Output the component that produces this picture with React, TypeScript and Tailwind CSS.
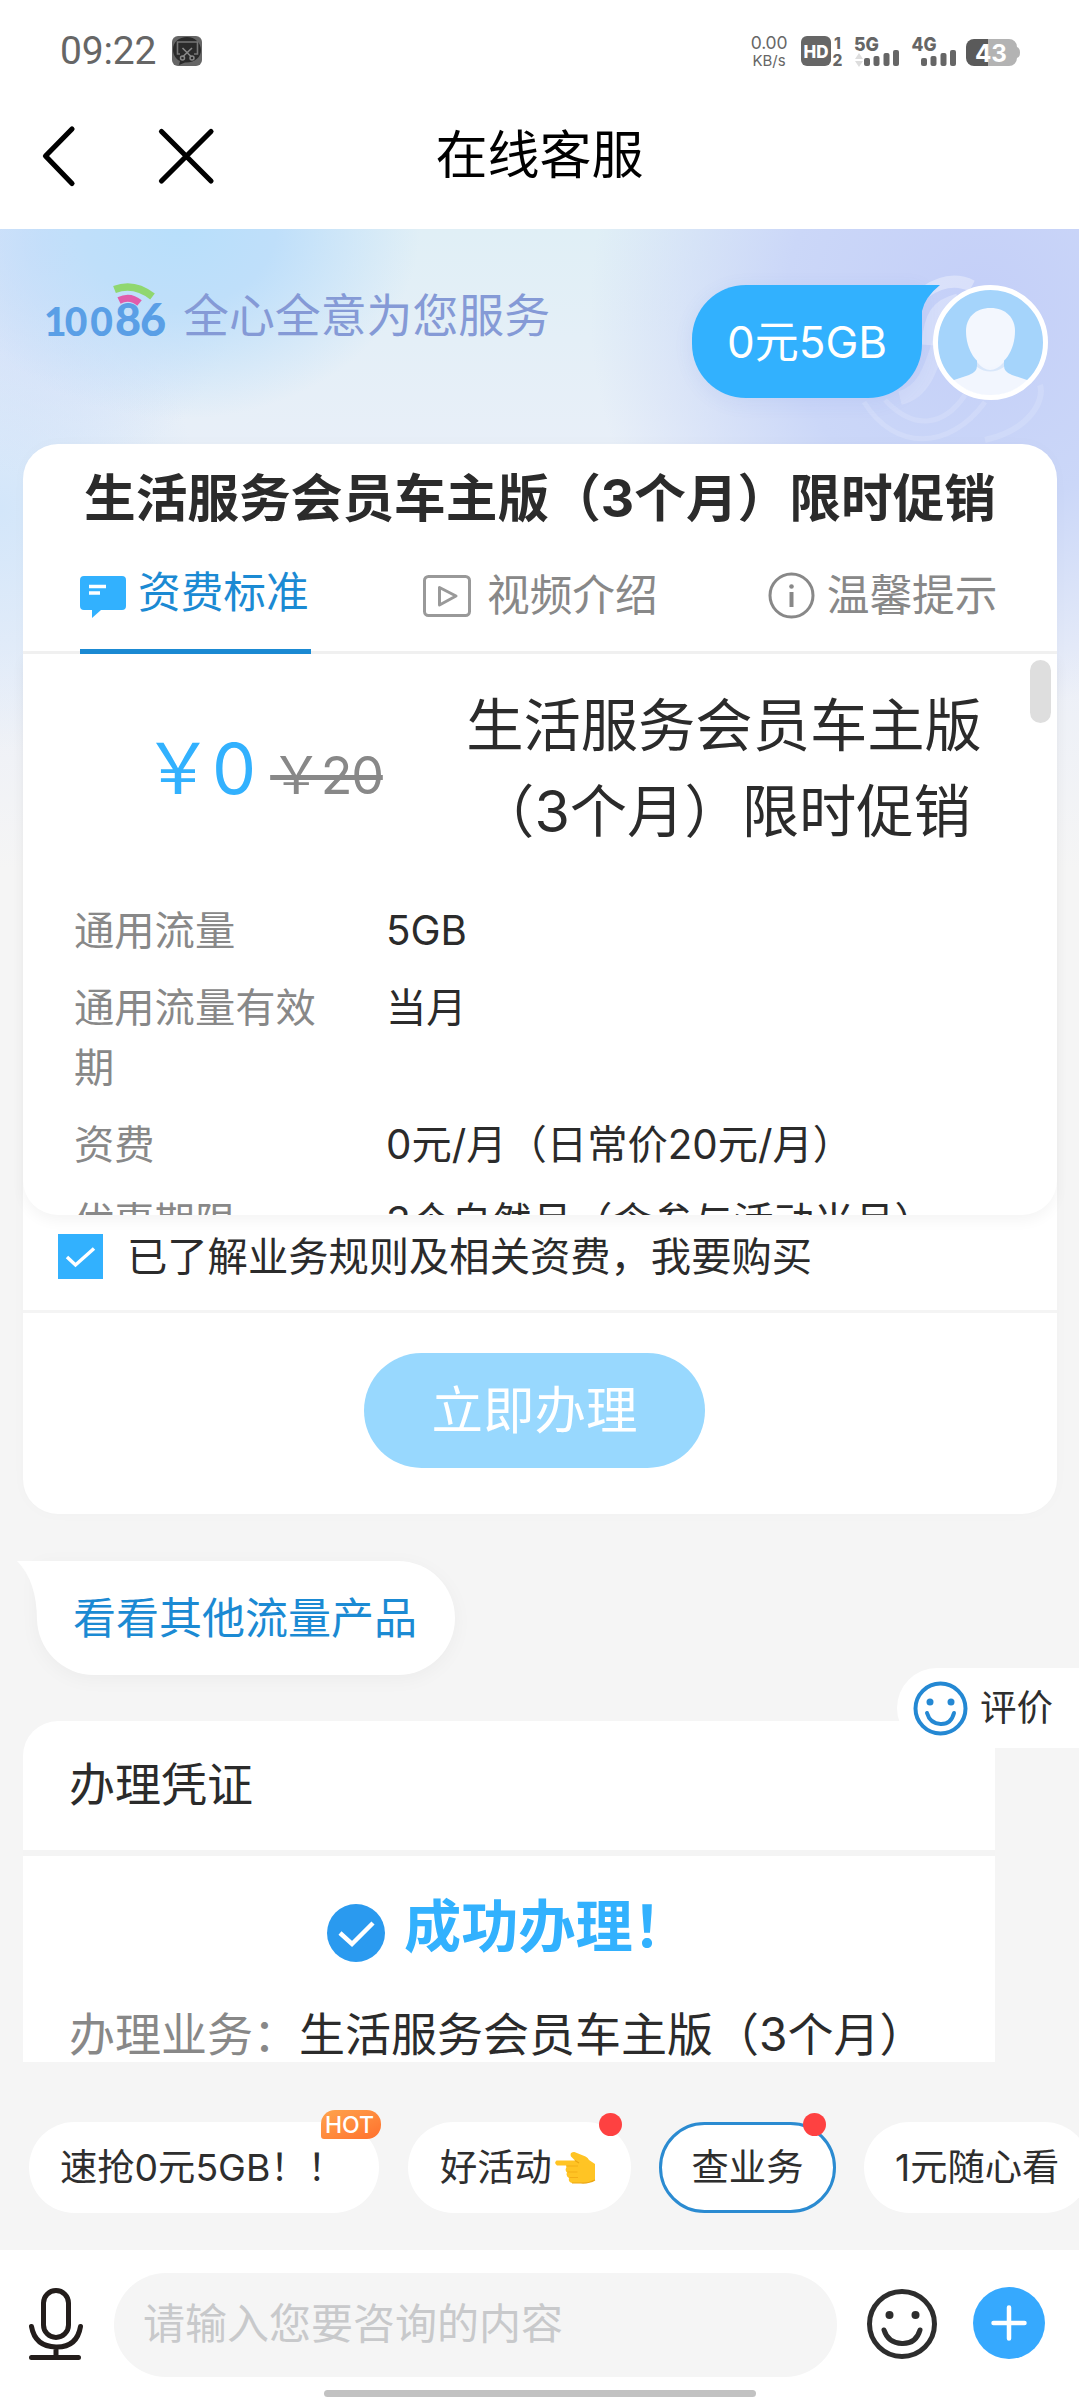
import React from "react";

function StatusBar() {
  return (
    <div className="flex h-[102px] items-center pl-[60px] text-[#666]">
      <span className="w-[112px] font-[Roboto] text-[39px] leading-none tracking-[-0.2px]">09:22</span>
      <svg width="30" height="30" viewBox="0 0 30 30">
        <rect width="30" height="30" rx="6" fill="#666" />
        <path d="M15 1C7 1 1 6 1 13.500C1 19 4 23 8 25l-1 4 6-2.500C23 27 29 21 29 14S23 1 15 1Z" fill="#2a2a2a" />
        <path d="M8 18H5.500V6h20v12H22" fill="none" stroke="#777" strokeWidth="1.600" />
        <path d="M10.500 12l9 9M20 12l-9.500 9" stroke="#888" strokeWidth="1.600" />
        <circle cx="10.500" cy="22" r="2" fill="none" stroke="#888" strokeWidth="1.500" />
        <circle cx="20" cy="22" r="2" fill="none" stroke="#888" strokeWidth="1.500" />
      </svg>
      <div className="ml-[547px] flex w-[40px] flex-col items-center font-[Inter] leading-none">
        <span className="text-[17.500px] leading-[17px] tracking-[-0.2px]">0.00</span>
        <span className="pt-[2px] text-[15px] leading-[15px]">KB/s</span>
      </div>
      <svg className="ml-[12px] overflow-visible" width="222" height="32" viewBox="801 35 222 32" fontFamily="Inter, sans-serif" fontWeight="800" fill="#666">
        <rect x="801" y="36" width="30" height="30" rx="6" />
        <text x="803.500" y="58" fontSize="17.500" fill="#fff" textLength="25" lengthAdjust="spacingAndGlyphs">HD</text>
        <text x="834" y="48.500" fontSize="15.500">1</text>
        <text x="832.500" y="65.500" fontSize="15.500">2</text>
        <text x="854" y="51" fontSize="19" textLength="25" lengthAdjust="spacingAndGlyphs">5G</text>
        <path d="M855 59l4-6 4 6zM855 61l4 6 4-6z" fill="#ddd" />
        <rect x="864" y="58" width="6" height="8" rx="2" />
        <rect x="873.500" y="56" width="6" height="10" rx="2" />
        <rect x="883.500" y="53" width="6" height="13" rx="2" />
        <rect x="893" y="50" width="6" height="16" rx="2" />
        <text x="911.500" y="51" fontSize="19" textLength="25" lengthAdjust="spacingAndGlyphs">4G</text>
        <rect x="921" y="58" width="6" height="8" rx="2" />
        <rect x="930.500" y="56" width="6" height="10" rx="2" />
        <rect x="940.500" y="53" width="6" height="13" rx="2" />
        <rect x="950" y="50" width="6" height="16" rx="2" />
        <path d="M988 39h21a8 8 0 0 1 8 8q3 1 3 5.500t-3 5.500a8 8 0 0 1-8 8h-21z" fill="#b3b3b3" />
        <path d="M988 39h-14a8 8 0 0 0-8 8v11a8 8 0 0 0 8 8h14z" fill="#5a5a5a" />
        <text x="975" y="61.500" fontSize="24" fontWeight="700" fill="#fff" textLength="32" lengthAdjust="spacingAndGlyphs">43</text>
      </svg>
    </div>
  );
}

function TitleBar() {
  return (
    <div className="relative flex h-[127px] items-start justify-center">
      <svg className="absolute left-[40px] top-[22px]" width="180" height="66" viewBox="40 124 180 66" fill="none" stroke="#000" strokeWidth="5.200" strokeLinecap="round" strokeLinejoin="round">
        <path d="M72 129L45.500 156L72 183.500" />
        <path d="M161.500 131.500L211 181M211 131.500L161.500 181" />
      </svg>
      <h1 className="pt-[24px] text-[52px] leading-[60px] text-black">在线客服</h1>
    </div>
  );
}

function Banner() {
  return (
    <div className="relative flex h-[215px] items-start pl-[45px]">
      <svg className="absolute left-[840px] top-[40px]" width="239" height="175" viewBox="840 269 239 175" fill="none" stroke="#fff">
        <path d="M925 292Q950 275 972 286" strokeWidth="12" strokeOpacity=".35" />
        <path d="M928 345C930 315 938 305 958 300" strokeWidth="13" strokeOpacity=".28" />
        <path d="M900 398C925 392 932 365 940 340" strokeWidth="14" strokeOpacity=".18" />
        <path d="M864 402C895 452 950 450 985 402M885 400C915 432 945 425 965 395" strokeWidth="5" strokeOpacity=".15" />
        <path d="M985 440C1030 430 1045 400 1040 385" strokeWidth="6" strokeOpacity=".14" />
      </svg>
      <div className="relative flex h-[112px] w-[138px] items-end font-['Lato'] font-black leading-none text-[#5a9fe6]">
        <svg className="absolute left-[66px] top-[51px]" width="46" height="28" viewBox="111 280 46 28" fill="none">
          <path d="M114.500 289.500Q134 282 152.500 296.500" stroke="#90d770" strokeWidth="7.500" />
          <path d="M119 300.500Q130 295 139.500 303" stroke="#e05cab" strokeWidth="7" />
        </svg>
        <span className="text-[39px] leading-[39px] tracking-[3px]">
          <span className="-ml-[1px] tracking-[-3px]">1</span><span className="ml-[1px]">00</span>
        </span>
        <span className="-ml-[1px] text-[45px] leading-[43px] tracking-[-1px]">86</span>
      </div>
      <span className="mt-[59px] text-[45.900px] font-normal leading-[56px] text-[#859ad6]">全心全意为您服务</span>
      <div className="absolute left-[692px] top-[56px] flex h-[113px] w-[230px] items-center justify-center rounded-[54px] rounded-tr-none bg-[#32b1fe] text-[44px] text-white shadow-[0_4px_20px_rgba(60,100,200,0.08)]">
        0元5GB
        <svg className="absolute left-[229px] top-0" width="20" height="26" viewBox="0 0 20 26"><path d="M0 0H19Q4 12 1 26H0Z" fill="#32b1fe" /></svg>
      </div>
      <svg className="absolute left-[932px] top-[55px]" width="117" height="117" viewBox="0 0 117 117">
        <defs><clipPath id="face"><circle cx="58.500" cy="58.500" r="53" /></clipPath></defs>
        <circle cx="58.500" cy="58.500" r="55" fill="#a5d4fb" />
        <g clipPath="url(#face)">
          <path d="M45 70V82q0 6-8 9L19 97V120H98V97L80 91q-8-3-8-9V70Z" fill="#f2f6fe" />
          <path d="M45 78Q58 94 72 78V83Q58 92 45 83Z" fill="#d9e7fa" />
          <path d="M58.500 24C74 24 83 34 83 47C83 66 72 83 58.500 83S34 66 34 47C34 34 43 24 58.500 24Z" fill="#f3f7fe" />
        </g>
        <circle cx="58.500" cy="58.500" r="55" fill="none" stroke="#fff" strokeWidth="5" />
      </svg>
    </div>
  );
}

function Tabs() {
  return (
    <div className="flex h-[102px] border-b-[3px] border-[#f1f1f1] pl-[57px] text-[42.700px] leading-[56px] text-[#888]">
      <div className="relative flex w-[231px] pt-[13px] text-[#1b8ad3]">
        <svg className="mt-[11px] shrink-0" width="46" height="42" viewBox="0 0 46 42">
          <path d="M4 0H42a4 4 0 0 1 4 4V30a4 4 0 0 1-4 4H21L12 42V34H4a4 4 0 0 1-4-4V4a4 4 0 0 1 4-4Z" fill="#32b1fe" />
          <path d="M9 10.500H26M9 17H20" stroke="#fff" strokeWidth="3.500" />
        </svg>
        <span className="ml-[12px] whitespace-nowrap">资费标准</span>
        <span className="absolute -bottom-[3px] left-0 h-[5px] w-[231px] bg-[#1b8ad3]" />
      </div>
      <div className="ml-[112px] flex pt-[16px]">
        <svg className="mt-[7px] shrink-0" width="48" height="42" viewBox="0 0 48 42" fill="none" stroke="#999" strokeWidth="3" strokeLinejoin="round">
          <rect x="1.500" y="1.500" width="45" height="39" rx="4" />
          <path d="M16.500 12.500V30L33 21Z" />
        </svg>
        <span className="ml-[16px]">视频介绍</span>
      </div>
      <div className="ml-[110px] flex pt-[16px]">
        <svg className="mt-[4px] shrink-0" width="47" height="47" viewBox="0 0 47 47" fill="none" stroke="#888" strokeWidth="3">
          <circle cx="23.500" cy="23.500" r="21.500" />
          <path d="M23.500 20V35" strokeWidth="4" />
          <circle cx="23.500" cy="14.500" r="2.300" fill="#888" stroke="none" />
        </svg>
        <span className="ml-[12px]">温馨提示</span>
      </div>
    </div>
  );
}

const details = [
  ["通用流量", "5GB"],
  ["通用流量有效期", "当月"],
  ["资费", "0元/月（日常价20元/月）"],
  ["优惠期限", "3个自然月（含参与活动当月）"],
];

function ProductCard() {
  return (
    <section className="mx-[23px] h-[1070px] w-[1034px] shrink-0 rounded-[35px] bg-white text-[#2b2b2b] shadow-[0_0_16px_rgba(0,0,0,0.02)]">
      <h2 className="flex h-[108px] items-center justify-center whitespace-nowrap pt-[2px] text-[51.700px] font-bold">生活服务会员车主版（3个月）限时促销</h2>
      <Tabs />
      <div className="relative h-[561px] overflow-hidden rounded-b-[35px] bg-white shadow-[0_6px_14px_rgba(0,0,0,0.045)]">
        <span className="absolute right-[6px] top-[6px] h-[63px] w-[21px] rounded-full bg-[#dedede]" />
        <div className="flex pt-[28px]">
          <div className="flex w-[416px] items-baseline pl-[120px] pt-[43px]">
            <span className="text-[70px] leading-[88px] tracking-[-1px] text-[#32b1fe]">￥0</span>
            <span className="ml-[15px] whitespace-nowrap text-[52px] leading-[60px] tracking-[-1.300px] text-[#888] line-through decoration-[5px]">￥20</span>
          </div>
          <p className="w-[570px] text-center text-[57.300px] leading-[86px]">生活服务会员车主版<br />（3个月）限时促销</p>
        </div>
        <dl className="mt-[47px] flex flex-col gap-[17px] pl-[51px] text-[40.300px] leading-[60px]">
          {details.map(([label, value]) => (
            <div key={label} className="flex">
              <dt className="w-[261px] shrink-0 text-[#888]">
                {label.length > 6 ? <>{label.slice(0, 6)}<br />{label.slice(6)}</> : label}
              </dt>
              <dd className="ml-[51px] whitespace-nowrap">{value}</dd>
            </div>
          ))}
        </dl>
      </div>
      <div className="flex h-[98px] items-start border-b-[3px] border-[#f4f4f4] pl-[35px] pt-[19px]">
        <svg width="45" height="45" viewBox="0 0 45 45"><rect width="45" height="45" fill="#32b1fe" /><path d="M9 23L17.500 31L36 14.500" fill="none" stroke="#fff" strokeWidth="3.500" /></svg>
        <span className="ml-[24px] -mt-[5px] text-[40.300px] leading-[56px]">已了解业务规则及相关资费，我要购买</span>
      </div>
      <button className="ml-[341px] mt-[40px] flex h-[115px] w-[341px] items-center justify-center rounded-full bg-[#98d8fe] text-[51.500px] text-white">立即办理</button>
    </section>
  );
}

function Receipt() {
  return (
    <section className="ml-[23px] mt-[46px] h-[341px] w-[972px] shrink-0 overflow-hidden rounded-tl-[35px] bg-white text-[46px] leading-[60px] text-[#2b2b2b]">
      <h3 className="h-[135px] border-b-[6px] border-[#f4f4f4] pl-[46px] pt-[33px]">办理凭证</h3>
      <div className="flex h-[137px] pl-[304px] pt-[35px]">
        <svg className="mt-[13px]" width="58" height="58" viewBox="0 0 58 58"><circle cx="29" cy="29" r="29" fill="#2a9aef" /><path d="M13 29L25 40L46 19" fill="none" stroke="#fff" strokeWidth="4.500" /></svg>
        <strong className="ml-[19px] text-[57.200px] leading-[72px] text-[#32b1fe]">成功办理！</strong>
      </div>
      <p className="whitespace-nowrap pl-[46px] pt-[11px]"><span className="text-[#888]">办理业务：</span>生活服务会员车主版（3个月）</p>
    </section>
  );
}

function QuickActions() {
  return (
    <div className="flex h-[188px] shrink-0 overflow-hidden pl-[29px] pt-[60px] text-[37.300px] text-[#2e2e2e]">
      <div className="relative flex h-[91px] w-[350px] shrink-0 items-center rounded-full bg-white pl-[31px] whitespace-nowrap">
        速抢0元5GB！！
        <span className="absolute left-[292px] -top-[12px] flex h-[29px] w-[60px] items-center justify-center rounded-[14px] rounded-bl-[3px] bg-gradient-to-br from-[#ffa44d] to-[#ff6f2c] pr-[3px] pt-[2px] text-[23px] font-medium text-white">HOT</span>
      </div>
      <div className="relative ml-[29px] flex h-[91px] w-[223px] shrink-0 items-center rounded-full bg-white pl-[32px]">
        好活动
        <svg className="ml-[2px]" width="42" height="33" viewBox="0 0 42 33">
          <path d="M2.500 9.500H21L17 5.500C15.500 2.500 18 .5 21 1.200L31.500 5.500Q34 6.500 35 9L41 13V29Q35 32.500 27 32H18Q14 31 15 27Q11.500 25 13 21.500Q10.500 19.500 12.500 16L12 14.500H3Q-.5 12 2.500 9.500Z" fill="#ffc424" />
          <path d="M12.500 15H24M13.500 21H23.500M15.500 26.500H24" fill="none" stroke="#f3ae17" strokeWidth="1.200" />
          <path d="M21 9.500L25 12M41 29Q35 32.500 27 32H18" fill="none" stroke="#eba612" strokeWidth="1.200" />
        </svg>
        <span className="absolute left-[191px] -top-[9px] size-[23px] rounded-full bg-[#fe4141]" />
      </div>
      <div className="relative ml-[28px] flex h-[91px] w-[177px] shrink-0 items-center justify-center rounded-full border-[3px] border-[#2b8bd1] bg-white">
        查业务
        <span className="absolute left-[141px] -top-[12px] size-[23px] rounded-full bg-[#fe4141]" />
      </div>
      <div className="ml-[28px] flex h-[91px] w-[226px] shrink-0 items-center rounded-full bg-white pl-[31px] whitespace-nowrap">1元随心看</div>
    </div>
  );
}

function InputBar() {
  return (
    <div className="relative flex h-[150px] shrink-0 items-start bg-white pt-[23px]">
      <svg className="ml-[28px] mt-[15px]" width="56" height="74" viewBox="0 0 56 74" fill="none" stroke="#231d1b" strokeWidth="5" strokeLinecap="round">
        <rect x="15.500" y="2.500" width="25" height="47" rx="12.500" />
        <path d="M3.500 38.500Q7 58.500 28 59T52.500 38.500M28 59V69M3.500 69.500H50.500" />
      </svg>
      <div className="ml-[30px] flex h-[104px] w-[723px] items-center rounded-full bg-[#f5f5f5] pb-[4px] pl-[29px] text-[42px] text-[#c8c9cb]">请输入您要咨询的内容</div>
      <svg className="ml-[29px] mt-[15px]" width="72" height="72" viewBox="0 0 72 72" fill="none" stroke="#2d2d2d" strokeWidth="5" strokeLinecap="round">
        <circle cx="36" cy="36" r="32.500" />
        <path d="M18 42Q22 55 36 55.500T54 42" />
        <circle cx="23.500" cy="27" r="4" fill="#2d2d2d" stroke="none" />
        <circle cx="49.500" cy="27" r="4" fill="#2d2d2d" stroke="none" />
      </svg>
      <svg className="ml-[35px] mt-[14px]" width="72" height="72" viewBox="0 0 72 72"><circle cx="36" cy="36" r="36" fill="#36a9fe" /><path d="M20.500 36H51.500M36 20.500V51.500" stroke="#fff" strokeWidth="4.500" strokeLinecap="round" /></svg>
      <span className="absolute left-[324px] top-[140px] h-[7px] w-[432px] rounded-full bg-[#c2c2c2]" />
    </div>
  );
}

export default function App() {
  return (
    <main className="relative flex h-[2400px] w-[1079px] flex-col overflow-hidden bg-[#f5f5f5] font-['Inter','Noto_Sans_CJK_SC',sans-serif]">
      <header className="h-[229px] shrink-0 bg-white">
        <StatusBar />
        <TitleBar />
      </header>
      <div className="flex h-[1833px] shrink-0 flex-col bg-[radial-gradient(ellipse_240px_190px_at_180px_0px,#b8dffb_0%,#bfdffa_40%,transparent_100%),radial-gradient(ellipse_200px_240px_at_50px_10px,#cfdcfa_0%,transparent_100%),radial-gradient(ellipse_390px_400px_at_980px_80px,#c4cff8_0%,#cbd7f8_50%,transparent_100%),radial-gradient(ellipse_200px_240px_at_0px_280px,#d3e6fa_0%,transparent_100%),linear-gradient(to_bottom,#e0eff6_0px,#e8eff8_220px,#ebeff8_420px,#f5f5f5_640px)]">
        <Banner />
        <ProductCard />
        <div className="relative ml-[37px] mt-[47px] flex h-[114px] w-[418px] shrink-0 items-center whitespace-nowrap rounded-[57px] rounded-tl-none bg-white pl-[36px] text-[43px] text-[#1b8ad3] shadow-[0_4px_20px_rgba(0,0,0,0.04)]">
          <svg className="absolute -left-[20px] top-0" width="22" height="60" viewBox="0 0 22 60"><path d="M0 0H22V60H20Q20 20 0 0Z" fill="#fff" /></svg>
          看看其他流量产品
        </div>
        <Receipt />
      </div>
      <QuickActions />
      <InputBar />
      <div className="absolute right-0 top-[1668px] flex h-[80px] w-[182px] items-center rounded-l-full bg-white pl-[16px] text-[36.500px] text-[#2e2e2e]">
        <svg width="55" height="55" viewBox="0 0 55 55" fill="none" stroke="#2488d3" strokeWidth="4" strokeLinecap="round">
          <circle cx="27.500" cy="27.500" r="25" />
          <path d="M14 32Q17 42.500 27.500 43T41 32" />
          <circle cx="17" cy="21" r="3.500" fill="#2488d3" stroke="none" />
          <circle cx="38" cy="21" r="3.500" fill="#2488d3" stroke="none" />
        </svg>
        <span className="ml-[12px]">评价</span>
      </div>
    </main>
  );
}
